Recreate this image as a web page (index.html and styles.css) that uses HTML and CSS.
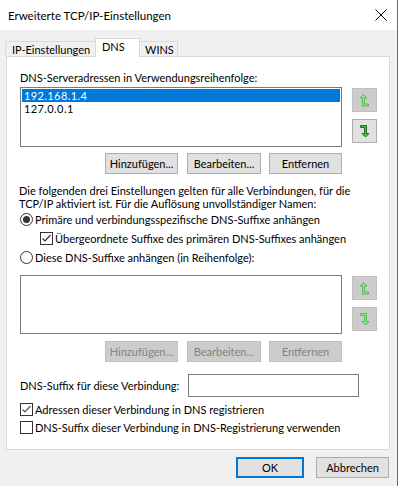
FILE: index.html
```html
<!DOCTYPE html>
<html lang="de">
<head>
<meta charset="utf-8">
<title>Erweiterte TCP/IP-Einstellungen</title>
<link rel="stylesheet" href="styles.css">
</head>
<body>
<div class="window">
  <div class="titlebar">
    <span class="title">Erweiterte TCP/IP-Einstellungen</span>
    <svg class="close" width="12" height="12" viewBox="0 0 12 12"><path d="M0.5 0.5 L11.5 11.5 M11.5 0.5 L0.5 11.5" stroke="#000" stroke-width="1" fill="none"/></svg>
  </div>
  <div class="tabs">
    <div class="tab tab-ip">IP-Einstellungen</div>
    <div class="tab tab-dns active">DNS</div>
    <div class="tab tab-wins">WINS</div>
  </div>
  <div class="panel">
    <div class="label">DNS-Serveradressen in Verwendungsreihenfolge:</div>
    <div class="listrow">
      <div class="listbox">
        <div class="item sel">192.168.1.4</div>
        <div class="item">127.0.0.1</div>
      </div>
      <div class="arrows">
        <div class="abtn disabled">
          <svg width="9" height="13" viewBox="0 0 9 13"><polygon class="arr-off" points="3.5,0.5 7,4 4.5,4 4.5,10 8.5,10 8.5,12 2.5,12 2.5,4 0,4"/></svg>
        </div>
        <div class="abtn">
          <svg width="9" height="13" viewBox="0 0 9 13"><polygon class="arr-on" points="0.5,0.5 6.5,0.5 6.5,8.5 9,8.5 5.5,12 2,8.5 4.5,8.5 4.5,2.5 0.5,2.5"/></svg>
        </div>
      </div>
    </div>
    <div class="btnrow">
      <div class="btn w73">Hinzufügen...</div>
      <div class="btn w74">Bearbeiten...</div>
      <div class="btn w73">Entfernen</div>
    </div>
    <p class="desc">Die folgenden drei Einstellungen gelten für alle Verbindungen, für die<br>TCP/IP aktiviert ist. Für die Auflösung unvollständiger Namen:</p>
    <div class="opt">
      <span class="radio checked"></span>
      <span>Primäre und verbindungsspezifische DNS-Suffixe anhängen</span>
    </div>
    <div class="opt sub">
      <span class="check"><svg width="11" height="11" viewBox="0 0 11 11"><path d="M1.5 5.5 L4 8 L9.5 2" stroke="#333" stroke-width="1.2" fill="none"/></svg></span>
      <span>Übergeordnete Suffixe des primären DNS-Suffixes anhängen</span>
    </div>
    <div class="opt">
      <span class="radio"></span>
      <span>Diese DNS-Suffixe anhängen (in Reihenfolge):</span>
    </div>
    <div class="listrow second">
      <div class="listbox empty"></div>
      <div class="arrows">
        <div class="abtn disabled">
          <svg width="9" height="13" viewBox="0 0 9 13"><polygon class="arr-off" points="3.5,0.5 7,4 4.5,4 4.5,10 8.5,10 8.5,12 2.5,12 2.5,4 0,4"/></svg>
        </div>
        <div class="abtn disabled">
          <svg width="9" height="13" viewBox="0 0 9 13"><polygon class="arr-off" points="0.5,0.5 6.5,0.5 6.5,8.5 9,8.5 5.5,12 2,8.5 4.5,8.5 4.5,2.5 0.5,2.5"/></svg>
        </div>
      </div>
    </div>
    <div class="btnrow second">
      <div class="btn w73 disabled">Hinzufügen...</div>
      <div class="btn w74 disabled">Bearbeiten...</div>
      <div class="btn w73 disabled">Entfernen</div>
    </div>
    <div class="suffixrow">
      <span class="suffix-label">DNS-Suffix für diese Verbindung:</span>
      <div class="textbox"></div>
    </div>
    <div class="opt chk first">
      <span class="check"><svg width="11" height="11" viewBox="0 0 11 11"><path d="M1.5 5.5 L4 8 L9.5 2" stroke="#555" stroke-width="1.2" fill="none"/></svg></span>
      <span>Adressen dieser Verbindung in DNS registrieren</span>
    </div>
    <div class="opt chk">
      <span class="check"></span>
      <span>DNS-Suffix dieser Verbindung in DNS-Registrierung verwenden</span>
    </div>
  </div>
  <div class="footer">
    <div class="btn ok">OK</div>
    <div class="btn cancel">Abbrechen</div>
  </div>
</div>
</body>
</html>
```

FILE: styles.css
```css
* { box-sizing: border-box; }
html, body { margin: 0; padding: 0; }
body {
  font-family: Lato, "Noto Sans", sans-serif;
  font-size: 11px;
  color: #000;
  background: #f0f0f0;
  white-space: nowrap;
}
.window {
  width: 398px;
  height: 486px;
  background: #f0f0f0;
  border-right: 1px solid #1a7fd4;
}
.titlebar {
  height: 30px;
  background: #fff;
  display: flex;
  align-items: center;
  justify-content: space-between;
  padding: 0 10px 0 8px;
}
.title { font-size: 11.5px; }
.close { display: block; }
.tabs {
  display: flex;
  align-items: flex-end;
  height: 18px;
  margin: 8px 0 0 5px;
}
.tab {
  height: 15px;
  border: 1px solid #d9d9d9;
  border-bottom: none;
  background: #f0f0f0;
  line-height: 15px;
  padding-left: 6px;
}
.tab-ip { width: 90px; border-right: none; }
.tab-dns { width: 45px; }
.tab-wins { width: 38px; border-left: none; padding-left: 5px; }
.tab.active {
  height: 19px;
  background: #fff;
  position: relative;
  z-index: 1;
  margin-bottom: -1px;
  line-height: 15px;
}
.panel {
  width: 384px;
  height: 394px;
  margin-left: 6px;
  background: #fff;
  border: 1px solid #d9d9d9;
  padding: 13px 0 0 13px;
}
.label { line-height: 15px; }
.listrow {
  display: flex;
  margin-top: 2px;
}
.listbox {
  width: 322px;
  height: 60px;
  border: 1px solid #7a7a7a;
  padding: 1px;
}
.listbox.empty { height: 59px; }
.item {
  height: 13px;
  line-height: 13px;
  padding-left: 2px;
  letter-spacing: 0.4px;
}
.item.sel { background: #0078d7; color: #fff; }
.arrows {
  display: flex;
  flex-direction: column;
  gap: 7px;
  margin: 1px 0 0 10px;
}
.abtn {
  width: 25px;
  height: 24px;
  border: 1px solid #adadad;
  background: #e1e1e1;
  display: flex;
  align-items: center;
  justify-content: center;
}
.abtn.disabled { background: #cccccc; border-color: #bfbfbf; }
.abtn svg { display: block; }
.arr-on { fill: #2fcf2f; stroke: #185e18; stroke-width: 0.9; }
.arr-off { fill: #8de58d; stroke: #4fb84f; stroke-width: 0.9; }
.btnrow {
  display: flex;
  margin: 6px 0 0 85px;
  gap: 8px;
}
.btnrow .btn:first-child { margin-right: 1px; }
.btnrow.second { margin-top: 7px; }
.btn {
  height: 21px;
  border: 1px solid #adadad;
  background: #e1e1e1;
  display: flex;
  align-items: center;
  justify-content: center;
}
.btn.disabled { background: #cccccc; border-color: #bfbfbf; color: #838383; }
.w73 { width: 73px; }
.w74 { width: 74px; }
.desc {
  margin: 10px 0 0 -1px;
  line-height: 13px;
}
.opt {
  display: flex;
  align-items: center;
  height: 19px;
  gap: 2px;
}
.opt.sub { padding-left: 20px; }
.radio {
  width: 13px;
  height: 13px;
  border: 1px solid #333;
  border-radius: 50%;
  display: flex;
  align-items: center;
  justify-content: center;
  background: #fff;
}
.radio.checked::after {
  content: "";
  width: 7px;
  height: 7px;
  border-radius: 50%;
  background: #333;
}
.check {
  width: 13px;
  height: 13px;
  border: 1px solid #333;
  background: #fff;
  display: flex;
  align-items: center;
  justify-content: center;
}
.check svg { display: block; }
.listrow.second { margin-top: 8px; }
.suffixrow {
  display: flex;
  align-items: center;
  margin-top: 12px;
}
.suffix-label { width: 168px; }
.textbox {
  width: 171px;
  height: 23px;
  border: 1px solid #7a7a7a;
  background: #fff;
}
.opt.chk { height: 18px; }
.opt.chk.first { margin-top: 3px; }
.footer {
  display: flex;
  justify-content: flex-end;
  gap: 12px;
  padding: 7px 8px 0 0;
}
.footer .btn { height: 21px; }
.ok { width: 68px; border: 2px solid #0078d7; }
.cancel { width: 73px; }
```
